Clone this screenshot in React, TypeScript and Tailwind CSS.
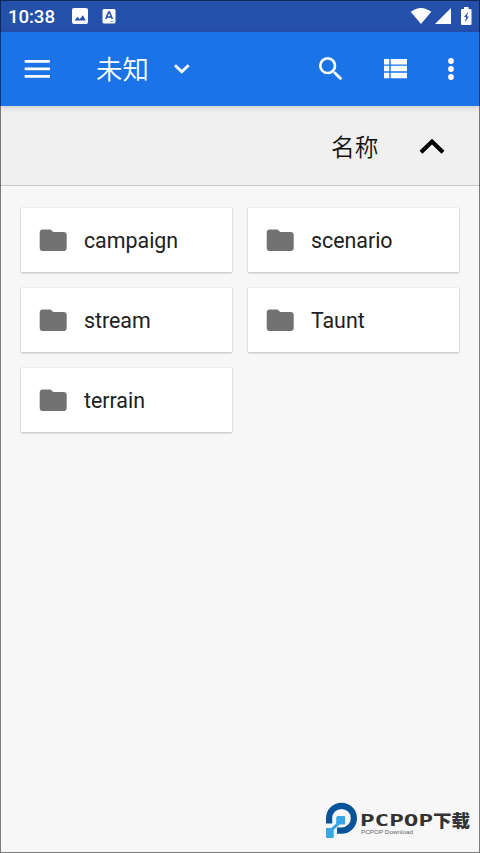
const FOLDERS = ['campaign', 'scenario', 'stream', 'Taunt', 'terrain'];

function StatusBar() {
  return (
    <div className="flex h-8 items-center bg-[#244fab] text-white">
      <span className="ml-[8px] w-[62px] pt-px text-[18.7px] leading-8 font-medium tracking-[-0.1px]">10:38</span>
      <svg className="ml-[2px] size-4" viewBox="0 0 16 16" fill="none">
        <rect width="16" height="16" rx="2" fill="#fff" />
        <path d="M2.5 12.5 5.6 8.7l2.1 2.5 3.1-3.9 3 5.2z" fill="#244fab" />
      </svg>
      <svg className="ml-[14px] h-[15px] w-[14px]" viewBox="0 0 14 15">
        <rect x="0.5" width="13" height="14.5" rx="1.5" fill="#fff" />
        <path d="M3.8 10 6.7 3h.8l2.9 7M4.9 8h4.4" fill="none" stroke="#244fab" strokeWidth="1.6" />
        <path d="M7.5 12.4h5" stroke="#a9bbdf" strokeWidth="1" />
      </svg>
      <svg className="ml-auto mr-[3px] h-[18px] w-[22px]" viewBox="0 0 22 18">
        <path d="M.7 4.8Q11-2.8 21.3 4.8L11 17z" fill="#fff" />
      </svg>
      <svg className="mr-[10px] size-4" viewBox="0 0 16 16">
        <path d="M16 0v16H0z" fill="#fff" />
      </svg>
      <svg className="mr-[8px] h-[18px] w-[11px]" viewBox="0 0 11 18">
        <path d="M3 0h4.5v2h2q1 0 1 1v14q0 1-1 1H1q-1 0-1-1V3q0-1 1-1h2z" fill="#fff" />
        <path d="M7.2 4.8 3 10h2.2l-1.4 5L8 9.4H5.8z" fill="#244fab" />
      </svg>
    </div>
  );
}

function Toolbar() {
  return (
    <header className="relative z-10 flex h-[74.4px] items-center bg-[#1b73e8] text-white shadow-[0_2px_6px_rgba(0,0,0,0.14)]">
      <svg className="ml-[24px] h-[18px] w-[27px]" viewBox="0 0 27 18" fill="#fff">
        <path d="M.7 0h25.2v2.7H.7zM.7 7.5h25.2v2.7H.7zM.7 15h25.2v2.7H.7z" />
      </svg>
      <h1 className="ml-[45px] w-[55px] pt-[2px] text-[26.4px] leading-8 font-[350]">未知</h1>
      <svg className="ml-[22px] h-[12px] w-[18px]" viewBox="0 0 18 12">
        <path d="m2 2.2 6.8 6.6 6.8-6.6" fill="none" stroke="#fff" strokeWidth="2.9" />
      </svg>
      <svg className="ml-[124px] size-8" viewBox="0 0 24 24" fill="#fff">
        <path d="M15.5 14h-.79l-.28-.27A6.47 6.47 0 0 0 16 9.5 6.5 6.5 0 1 0 9.5 16c1.61 0 3.09-.59 4.23-1.57l.27.28v.79l5 4.99L20.49 19l-4.99-5zm-6 0C7.01 14 5 11.99 5 9.5S7.01 5 9.5 5 14 7.01 14 9.5 11.99 14 9.5 14z" />
      </svg>
      <svg className="ml-[37px] h-[20px] w-[24px]" viewBox="0 0 24 20" fill="#fff">
        <path d="M0 0h5.3v5.5H0zM6.7 0H23v5.5H6.7zM0 6.8h5.3v5.5H0zM6.7 6.8H23v5.5H6.7zM0 13.7h5.3v5.6H0zM6.7 13.7H23v5.6H6.7z" />
      </svg>
      <svg className="ml-auto mr-[26px] h-[22px] w-[6px]" viewBox="0 0 6 22" fill="#fff">
        <circle cx="3" cy="3" r="2.9" />
        <circle cx="3" cy="11" r="2.9" />
        <circle cx="3" cy="19" r="2.9" />
      </svg>
    </header>
  );
}

function SortRow() {
  return (
    <div className="flex h-[79.6px] items-center justify-end border-b border-[#c9c9c9] bg-[#f0f0f0]">
      <span className="mr-[40.5px] pt-[4px] text-[23.7px] leading-8 font-[350] text-[#111]">名称</span>
      <svg className="mt-px mr-[34px] h-[17px] w-[27px]" viewBox="0 0 27 17">
        <path d="M2 14.2 13 3.6 24 14.2" fill="none" stroke="#000" strokeWidth="4.2" />
      </svg>
    </div>
  );
}

function FolderCard({ name }: { name: string }) {
  return (
    <div className="flex h-16 items-center bg-white shadow-[0_1px_2px_rgba(0,0,0,0.22),0_0_1px_rgba(0,0,0,0.15)]">
      <svg className="ml-[16px] size-[32.4px]" viewBox="0 0 24 24" fill="#727272">
        <path d="M10 4H4c-1.1 0-1.99.9-1.99 2L2 18c0 1.1.9 2 2 2h16c1.1 0 2-.9 2-2V8c0-1.1-.9-2-2-2h-8l-2-2z" />
      </svg>
      <span className="ml-[14.5px] pt-[2px] text-[21.4px] leading-7 text-[#202020]">{name}</span>
    </div>
  );
}

function Watermark() {
  return (
    <svg className="absolute left-[320px] top-[796px] h-[50px] w-[156px]" viewBox="320 796 156 50">
      <path d="M329.1 823.5v-5.3a12.4 12.4 0 1 1 12.4 12.4H337" fill="none" stroke="#05539b" strokeWidth="6.2" />
      <path d="M337 816h7.3q.8 0 .8.8v6.9q0 .8-.8.8h-4.6l-5.9 5.2v7.4q0 .8-.8.8h-6.2q-.8 0-.8-.8v-8.2q0-.8.8-.8h4.4l5-4.6v-5.9q0-.8.8-.8z" fill="#38a5e5" />
      <text x="360" y="826.3" textLength="73" lengthAdjust="spacingAndGlyphs" className="fill-[#333] font-['DejaVu_Sans_Mono'] text-[16px] font-bold">PCPOP</text>
      <text x="433" y="826.5" textLength="37" lengthAdjust="spacingAndGlyphs" className="fill-[#333] font-['Noto_Sans_CJK_SC',sans-serif] text-[17px] font-black">下载</text>
      <text x="361" y="833.9" textLength="52" lengthAdjust="spacingAndGlyphs" className="fill-[#666] font-['Liberation_Sans'] text-[5.6px]">PCPOP Download</text>
    </svg>
  );
}

export default function App() {
  return (
    <div className="relative h-[853px] w-[480px] overflow-hidden bg-[#f7f7f7] font-['Roboto','Noto_Sans_CJK_SC',sans-serif]">
      <StatusBar />
      <Toolbar />
      <SortRow />
      <main className="grid grid-cols-2 gap-x-4 gap-y-4 px-[21px] pt-[22px]">
        {FOLDERS.map((name) => (
          <FolderCard key={name} name={name} />
        ))}
      </main>
      <Watermark />
      <div className="pointer-events-none absolute inset-0 z-20 border border-black/50" />
    </div>
  );
}
